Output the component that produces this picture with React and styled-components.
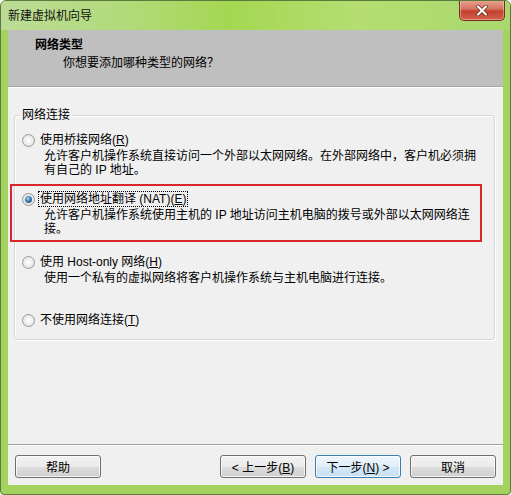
import React from "react";
import styled, { createGlobalStyle } from "styled-components";

const GlobalStyle = createGlobalStyle`
  html, body {
    margin: 0;
    padding: 0;
    background: #ffffff;
  }
  body {
    font-family: "Liberation Sans", "Noto Sans CJK SC", sans-serif;
    font-size: 12px;
    color: #000;
  }
`;

const Window = styled.div`
  width: 511px;
  height: 495px;
  box-sizing: border-box;
  display: flex;
  flex-direction: column;
  background: #a3d35e;
  border: 1px solid #5b7b3c;
  border-radius: 6px 6px 4px 4px;
  overflow: hidden;
`;

const TitleBar = styled.div`
  height: 29px;
  flex: none;
  display: flex;
  align-items: center;
  padding-left: 7px;
  background: linear-gradient(
    to right,
    #bcdc96 0%,
    #b1da7a 25%,
    #a4d751 45%,
    #b4de72 70%,
    #a9d86c 100%
  );
`;

const Title = styled.span`
  font-size: 12px;
  line-height: 16px;
  color: #111;
`;

const CloseButton = styled.button`
  align-self: flex-start;
  margin: -1px 5px 0 auto;
  width: 46px;
  height: 21px;
  padding: 0;
  border: 1px solid #7a2e22;
  border-top: none;
  border-radius: 0 0 5px 5px;
  background: linear-gradient(#e8a693 0%, #d47461 45%, #c2412c 55%, #d2614a 100%);
  box-shadow: inset 0 0 0 1px rgba(255, 255, 255, 0.35);
  display: flex;
  align-items: center;
  justify-content: center;
`;

const Frame = styled.div`
  flex: 1;
  display: flex;
  padding: 0 7px 9px;
`;

const Client = styled.div`
  flex: 1;
  display: flex;
  flex-direction: column;
  background: #f0f0f0;
`;

const Header = styled.div`
  height: 57px;
  box-sizing: border-box;
  padding: 7px 0 0 27px;
  background: #bfbfbf;
  border-bottom: 1px solid #a8a8a8;
  box-shadow: 0 1px 0 #ffffff;
`;

const HeaderTitle = styled.div`
  font-weight: bold;
  line-height: 16px;
`;

const HeaderSub = styled.div`
  margin: 2px 0 0 28px;
  line-height: 16px;
`;

const Body = styled.div`
  flex: 1;
  padding: 21px 8px 0 6px;
`;

const GroupBox = styled.fieldset`
  margin: 0;
  padding: 9px 0 10px;
  border: 1px solid #d5d5d5;
  border-radius: 3px;
  box-shadow: inset 1px 1px 0 #ffffff, 1px 1px 0 #ffffff;
`;

const Legend = styled.legend`
  margin-left: 5px;
  padding: 0 2px;
  line-height: 14px;
`;

const Option = styled.div`
  position: relative;
  padding-left: 7px;
  margin-top: ${(p) => p.$gap}px;

  ${(p) =>
    p.$marked &&
    `
    &::after {
      content: "";
      position: absolute;
      top: -7px;
      left: -5px;
      right: 12px;
      bottom: -6px;
      border: 2px solid #d7262c;
      pointer-events: none;
    }
  `}
`;

const OptionRow = styled.div`
  display: flex;
  align-items: center;
  height: 16px;
`;

const Radio = styled.span`
  width: 13px;
  height: 13px;
  box-sizing: border-box;
  border-radius: 50%;
  border: 1px solid #9a9a9a;
  background: radial-gradient(circle at 50% 50%, #ffffff 0%, #ececec 55%, #d4d4d4 100%);
  display: flex;
  align-items: center;
  justify-content: center;

  &::after {
    content: "";
    width: 7px;
    height: 7px;
    border-radius: 50%;
    background: ${(p) =>
      p.$checked
        ? "radial-gradient(circle at 40% 35%, #a8d8f6 0%, #3a7fb4 45%, #173f63 100%)"
        : "transparent"};
  }
`;

const Label = styled.span`
  margin-left: 4px;
  padding: 0 1px;
  line-height: 14px;
  white-space: nowrap;
  outline: ${(p) => (p.$focused ? "1px dotted #000" : "none")};
`;

const Key = styled.span`
  text-decoration: underline;
`;

const Desc = styled.div`
  margin: 1px 0 0 22px;
  min-height: ${(p) => (p.$empty ? 0 : 28)}px;
  line-height: 14px;
  white-space: nowrap;
`;

const Footer = styled.div`
  border-top: 1px solid #a0a0a0;
  box-shadow: inset 0 1px 0 #ffffff;
  display: flex;
  gap: 9px;
  padding: 10px 7px 7px;
`;

const Button = styled.button`
  width: 86px;
  height: 23px;
  padding: 0;
  font: inherit;
  font-size: 12px;
  color: #000;
  border: 1px solid ${(p) => (p.$default ? "#3c7fb1" : "#707070")};
  border-radius: 3px;
  background: ${(p) =>
    p.$default
      ? "linear-gradient(#eef6fc 0%, #e2eff9 50%, #d3e7f6 50%, #c9e1f3 100%)"
      : "linear-gradient(#f2f2f2 0%, #ebebeb 50%, #dddddd 50%, #cfcfcf 100%)"};
  box-shadow: inset 0 0 0 1px rgba(255, 255, 255, 0.75);
  margin-left: ${(p) => (p.$push ? "auto" : "0")};
`;

const options = [
  {
    label: ["使用桥接网络(", "R", ")"],
    desc: [
      "允许客户机操作系统直接访问一个外部以太网网络。在外部网络中，客户机必须拥",
      "有自己的 IP 地址。",
    ],
    gap: 1,
  },
  {
    label: ["使用网络地址翻译 (NAT)(", "E", ")"],
    desc: [
      "允许客户机操作系统使用主机的 IP 地址访问主机电脑的拨号或外部以太网网络连",
      "接。",
    ],
    checked: true,
    gap: 14,
  },
  {
    label: ["使用 Host-only 网络(", "H", ")"],
    desc: ["使用一个私有的虚拟网络将客户机操作系统与主机电脑进行连接。"],
    gap: 18,
  },
  {
    label: ["不使用网络连接(", "T", ")"],
    desc: [],
    gap: 13,
  },
];

export default function App() {
  return (
    <>
      <GlobalStyle />
      <Window>
        <TitleBar>
          <Title>新建虚拟机向导</Title>
          <CloseButton aria-label="关闭">
            <svg width="12" height="11" viewBox="0 0 12 11">
              <path
                d="M2 1.5 L10 9.5 M10 1.5 L2 9.5"
                stroke="#5a1a10"
                strokeWidth="3.4"
                strokeLinecap="round"
              />
              <path
                d="M2 1.5 L10 9.5 M10 1.5 L2 9.5"
                stroke="#ffffff"
                strokeWidth="2.2"
                strokeLinecap="round"
              />
            </svg>
          </CloseButton>
        </TitleBar>
        <Frame>
          <Client>
            <Header>
              <HeaderTitle>网络类型</HeaderTitle>
              <HeaderSub>你想要添加哪种类型的网络？</HeaderSub>
            </Header>
            <Body>
              <GroupBox>
                <Legend>网络连接</Legend>
                {options.map((o, i) => (
                  <Option key={i} $gap={o.gap} $marked={o.checked}>
                    <OptionRow>
                      <Radio $checked={o.checked} />
                      <Label $focused={o.checked}>
                        {o.label[0]}
                        <Key>{o.label[1]}</Key>
                        {o.label[2]}
                      </Label>
                    </OptionRow>
                    <Desc $empty={o.desc.length === 0}>
                      {o.desc.map((line, j) => (
                        <div key={j}>{line}</div>
                      ))}
                    </Desc>
                  </Option>
                ))}
              </GroupBox>
            </Body>
            <Footer>
              <Button>帮助</Button>
              <Button $push>
                &lt; 上一步(<Key>B</Key>)
              </Button>
              <Button $default>
                下一步(<Key>N</Key>) &gt;
              </Button>
              <Button>取消</Button>
            </Footer>
          </Client>
        </Frame>
      </Window>
    </>
  );
}
